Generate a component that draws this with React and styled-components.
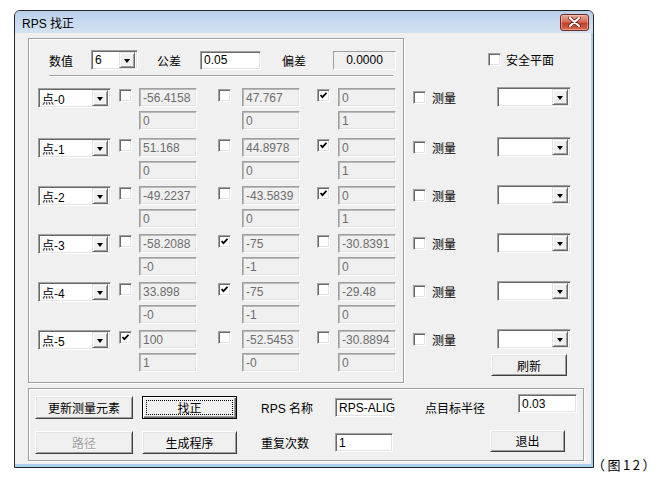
import React from "react";
import styled, { createGlobalStyle, css } from "styled-components";

const FONT = `"Liberation Sans", "Noto Sans CJK SC", sans-serif`;

const GlobalStyle = createGlobalStyle`
  body {
    margin: 0;
    background: #fff;
    font-family: ${FONT};
    font-size: 12px;
    color: #000;
  }
`;

// gaps between the point rows (px)
const ROW_GAPS = [8, 6, 6, 6, 6];

const ROWS = [
  { name: "点-0", axes: [[false, "-56.4158", "0"], [false, "47.767", "0"], [true, "0", "1"]] },
  { name: "点-1", axes: [[false, "51.168", "0"], [false, "44.8978", "0"], [true, "0", "1"]] },
  { name: "点-2", axes: [[false, "-49.2237", "0"], [false, "-43.5839", "0"], [true, "0", "1"]] },
  { name: "点-3", axes: [[false, "-58.2088", "-0"], [true, "-75", "-1"], [false, "-30.8391", "0"]] },
  { name: "点-4", axes: [[false, "33.898", "-0"], [true, "-75", "-1"], [false, "-29.48", "0"]] },
  { name: "点-5", axes: [[true, "100", "1"], [false, "-52.5453", "-0"], [false, "-30.8894", "0"]] },
];

const Page = styled.div`
  width: 658px;
  height: 479px;
  box-sizing: border-box;
  padding: 10px 0 0 14px;
  display: flex;
  align-items: flex-start;
`;

const Window = styled.div`
  width: 582px;
  height: 458px;
  box-sizing: border-box;
  border: 1px solid #262626;
  border-radius: 6px 6px 0 0;
  background: #a9d0ea;
  display: flex;
  flex-direction: column;
  overflow: hidden;
`;

const TitleBar = styled.div`
  height: 22px;
  flex: none;
  display: flex;
  align-items: center;
  justify-content: space-between;
  padding: 0 4px 0 7px;
  background: linear-gradient(#b7cfea, #cbdcf0 60%, #d3e2f3);
  font-size: 12px;
`;

const CloseButton = styled.div`
  width: 29px;
  height: 17px;
  box-sizing: border-box;
  border: 1px solid #6e2a1f;
  border-radius: 3px;
  background: linear-gradient(#e9a898, #d66d57 45%, #c2402a 55%, #d56b50);
  display: flex;
  align-items: center;
  justify-content: center;
  box-shadow: inset 0 0 0 1px rgba(255, 210, 200, 0.5);
`;

const Client = styled.div`
  flex: 1;
  margin: 0 2px 3px 0;
  background: #f0f0f0;
  padding: 5px 0 0 13px;
`;

const UpperArea = styled.div`
  display: flex;
  height: 345px;
`;

const GroupBox = styled.div`
  box-sizing: border-box;
  border: 1px solid #a0a0a0;
  box-shadow: inset 1px 1px 0 #fff, 1px 1px 0 #fff;
`;

const UpperGroup = styled(GroupBox)`
  width: 376px;
  height: 345px;
`;

const HeaderRow = styled.div`
  display: flex;
  align-items: center;
  height: 20px;
  margin: 11px 0 0 20px;
`;

const Label = styled.span`
  display: inline-block;
  width: ${(p) => (p.$w ? `${p.$w}px` : "auto")};
  margin-left: ${(p) => p.$ml || 0}px;
  white-space: nowrap;
  font-size: 12px;
  flex: none;
`;

const Separator = styled.div`
  height: 0;
  margin: 5px 10px 0 20px;
  border-top: 1px solid #a0a0a0;
  border-bottom: 1px solid #fff;
`;

const PointList = styled.div`
  margin: 11px 0 0 9px;
`;

const PointRow = styled.div`
  display: grid;
  grid-template-columns: 81px 20px 79px 24px 75px 21px 58px;
  grid-template-rows: 20px 19px;
  row-gap: 3px;
  margin-top: ${(p) => p.$gap || 0}px;
`;

const sunken = css`
  border: 1px solid;
  border-color: #a0a0a0 #fff #fff #a0a0a0;
  box-shadow: inset 1px 1px 0 #696969, inset -1px -1px 0 #e3e3e3;
`;

const Combo = styled.div`
  width: ${(p) => p.$w}px;
  height: 20px;
  box-sizing: border-box;
  margin-left: ${(p) => p.$ml || 0}px;
  flex: none;
  background: #fff;
  display: flex;
  align-items: center;
  padding: 0 2px 0 3px;
  ${sunken}
`;

const ComboText = styled.span`
  flex: 1;
  font-size: 12px;
  white-space: nowrap;
`;

const DropButton = styled.div`
  width: 16px;
  height: 16px;
  box-sizing: border-box;
  background: #f0f0f0;
  border: 1px solid;
  border-color: #e3e3e3 #696969 #696969 #e3e3e3;
  box-shadow: inset 1px 1px 0 #fff, inset -1px -1px 0 #a0a0a0;
  display: flex;
  align-items: center;
  justify-content: center;

  &::before {
    content: "";
    border-left: 3.5px solid transparent;
    border-right: 3.5px solid transparent;
    border-top: 4px solid #000;
    margin-top: 1px;
  }
`;

const Field = styled.div`
  width: ${(p) => p.$w || 58}px;
  height: 19px;
  box-sizing: border-box;
  margin-left: ${(p) => p.$ml || 0}px;
  margin-bottom: ${(p) => p.$mb || 0}px;
  flex: none;
  display: flex;
  align-items: center;
  justify-content: ${(p) => (p.$center ? "center" : "flex-start")};
  padding-left: ${(p) => (p.$center ? 0 : 3)}px;
  font-size: 12px;
  white-space: nowrap;
  border: 1px solid;
  ${(p) =>
    p.$disabled
      ? css`
          background: #f0f0f0;
          color: #6d6d6d;
          border-color: #a0a0a0 #fff #fff #a0a0a0;
          box-shadow: inset 1px 1px 0 #b9b9b9, inset -1px -1px 0 #e3e3e3;
        `
      : p.$static
      ? css`
          background: #f0f0f0;
          color: #000;
          border-color: #a0a0a0 #fff #fff #a0a0a0;
          box-shadow: inset -1px -1px 0 #f0f0f0;
        `
      : css`
          background: #fff;
          color: #000;
          border-color: #a0a0a0 #fff #fff #a0a0a0;
          box-shadow: inset 1px 1px 0 #696969, inset -1px -1px 0 #e3e3e3;
        `}
`;

const Box = styled.span`
  width: 13px;
  height: 13px;
  box-sizing: border-box;
  flex: none;
  margin-top: ${(p) => p.$mt || 0}px;
  background: #fff;
  display: inline-flex;
  align-items: center;
  justify-content: center;
  border: 1px solid;
  border-color: #a0a0a0 #fff #fff #a0a0a0;
  box-shadow: inset 1px 1px 0 #696969, inset -1px -1px 0 #e3e3e3;
`;

const Check = ({ on, mt }) => (
  <Box $mt={mt}>
    {on && (
      <svg width="7" height="7" viewBox="0 0 7 7">
        <path d="M0.5 3 L2.5 5.2 L6.5 0.8" fill="none" stroke="#000" strokeWidth="1.8" />
      </svg>
    )}
  </Box>
);

const RightCol = styled.div`
  flex: 1;
  display: flex;
  flex-direction: column;
`;

const SafeRow = styled.div`
  display: flex;
  align-items: center;
  height: 20px;
  margin: 11px 0 0 84px;
  gap: 5px;
`;

const MeasureRow = styled.div`
  display: grid;
  grid-template-columns: 84px 74px;
  align-items: center;
  height: 20px;
  margin: ${(p) => p.$gap}px 0 0 9px;
`;

const CheckLabel = styled.div`
  display: flex;
  align-items: center;
  gap: 6px;
  font-size: 12px;
`;

const Button = styled.button`
  width: ${(p) => p.$w}px;
  height: ${(p) => p.$h || 23}px;
  margin-left: ${(p) => p.$ml || 0}px;
  margin-top: ${(p) => p.$mt || 0}px;
  margin-bottom: ${(p) => p.$mb || 0}px;
  box-sizing: border-box;
  padding: 0;
  flex: none;
  font-family: ${FONT};
  font-size: 12px;
  color: ${(p) => (p.disabled ? "#a0a0a0" : "#000")};
  text-shadow: ${(p) => (p.disabled ? "1px 1px 0 #fff" : "none")};
  background: #f0f0f0;
  border: 1px solid;
  border-color: ${(p) => (p.$focus ? "#000" : "#fff #404040 #404040 #fff")};
  box-shadow: ${(p) =>
    p.$focus
      ? "inset 1px 1px 0 #fff, inset -1px -1px 0 #696969, inset -2px -2px 0 #a0a0a0"
      : "inset 1px 1px 0 #e3e3e3, inset -1px -1px 0 #a0a0a0"};
  outline: ${(p) => (p.$focus ? "1px dotted #000" : "none")};
  outline-offset: -5px;
`;

const LowerGroup = styled(GroupBox)`
  width: 556px;
  height: 73px;
  margin-top: 5px;
  padding: 7px 0 0 6px;
  display: grid;
  grid-template-columns: 107px 119px 74px 90px 1fr;
  grid-template-rows: 23px 23px;
  row-gap: 12px;
  align-items: center;
`;

const Cell = styled.div`
  display: flex;
  align-items: center;
`;

const Caption = styled.div`
  align-self: flex-end;
  margin: 0 0 5px -2px;
  font-family: "Noto Sans CJK SC", sans-serif;
  font-size: 13px;
  letter-spacing: 2.5px;
  white-space: nowrap;
`;

export default function App() {
  return (
    <>
      <GlobalStyle />
      <Page>
        <Window>
          <TitleBar>
            <span>RPS 找正</span>
            <CloseButton>
              <svg width="13" height="10" viewBox="0 0 13 10">
                <path d="M2 1 L11 9 M11 1 L2 9" stroke="#5a1a10" strokeWidth="3.6" strokeLinecap="round" />
                <path d="M2 1 L11 9 M11 1 L2 9" stroke="#fff" strokeWidth="2.2" strokeLinecap="round" />
              </svg>
            </CloseButton>
          </TitleBar>
          <Client>
            <UpperArea>
              <UpperGroup>
                <HeaderRow>
                  <Label $w={42}>数值</Label>
                  <Combo $w={47}>
                    <ComboText>6</ComboText>
                    <DropButton />
                  </Combo>
                  <Label $w={43} $ml={19}>公差</Label>
                  <Field $w={61}>0.05</Field>
                  <Label $w={51} $ml={21}>偏差</Label>
                  <Field $w={63} $static $center>0.0000</Field>
                </HeaderRow>
                <Separator />
                <PointList>
                  {ROWS.map((row, i) => (
                    <PointRow key={row.name} $gap={i ? ROW_GAPS[i - 1] : 0}>
                      <Combo $w={73}>
                        <ComboText>{row.name}</ComboText>
                        <DropButton />
                      </Combo>
                      {row.axes.map(([on, top], j) => (
                        <React.Fragment key={j}>
                          <Check on={on} mt={1} />
                          <Field $disabled>{top}</Field>
                        </React.Fragment>
                      ))}
                      <span />
                      {row.axes.map(([, , bottom], j) => (
                        <React.Fragment key={"b" + j}>
                          <span />
                          <Field $disabled>{bottom}</Field>
                        </React.Fragment>
                      ))}
                    </PointRow>
                  ))}
                </PointList>
              </UpperGroup>
              <RightCol>
                <SafeRow>
                  <Check on={false} />
                  <Label>安全平面</Label>
                </SafeRow>
                {ROWS.map((row, i) => (
                  <MeasureRow key={row.name} $gap={i ? ROW_GAPS[i - 1] + 22 : 18}>
                    <CheckLabel>
                      <Check on={false} />
                      <span>测量</span>
                    </CheckLabel>
                    <Combo $w={74}>
                      <ComboText />
                      <DropButton />
                    </Combo>
                  </MeasureRow>
                ))}
                <Button $w={76} $h={22} $ml={87} $mt={5}>刷新</Button>
              </RightCol>
            </UpperArea>
            <LowerGroup>
              <Button $w={98}>更新测量元素</Button>
              <Button $w={95} $focus>找正</Button>
              <Label>RPS 名称</Label>
              <Field $w={58}>RPS-ALIG</Field>
              <Cell>
                <Label $w={93}>点目标半径</Label>
                <Field $w={59} $mb={8}>0.03</Field>
              </Cell>
              <Button $w={98} disabled>路径</Button>
              <Button $w={95}>生成程序</Button>
              <Label>重复次数</Label>
              <Field $w={58}>1</Field>
              <Cell>
                <Button $w={75} $h={22} $ml={65} $mb={4}>退出</Button>
              </Cell>
            </LowerGroup>
          </Client>
        </Window>
        <Caption>（图12）</Caption>
      </Page>
    </>
  );
}
